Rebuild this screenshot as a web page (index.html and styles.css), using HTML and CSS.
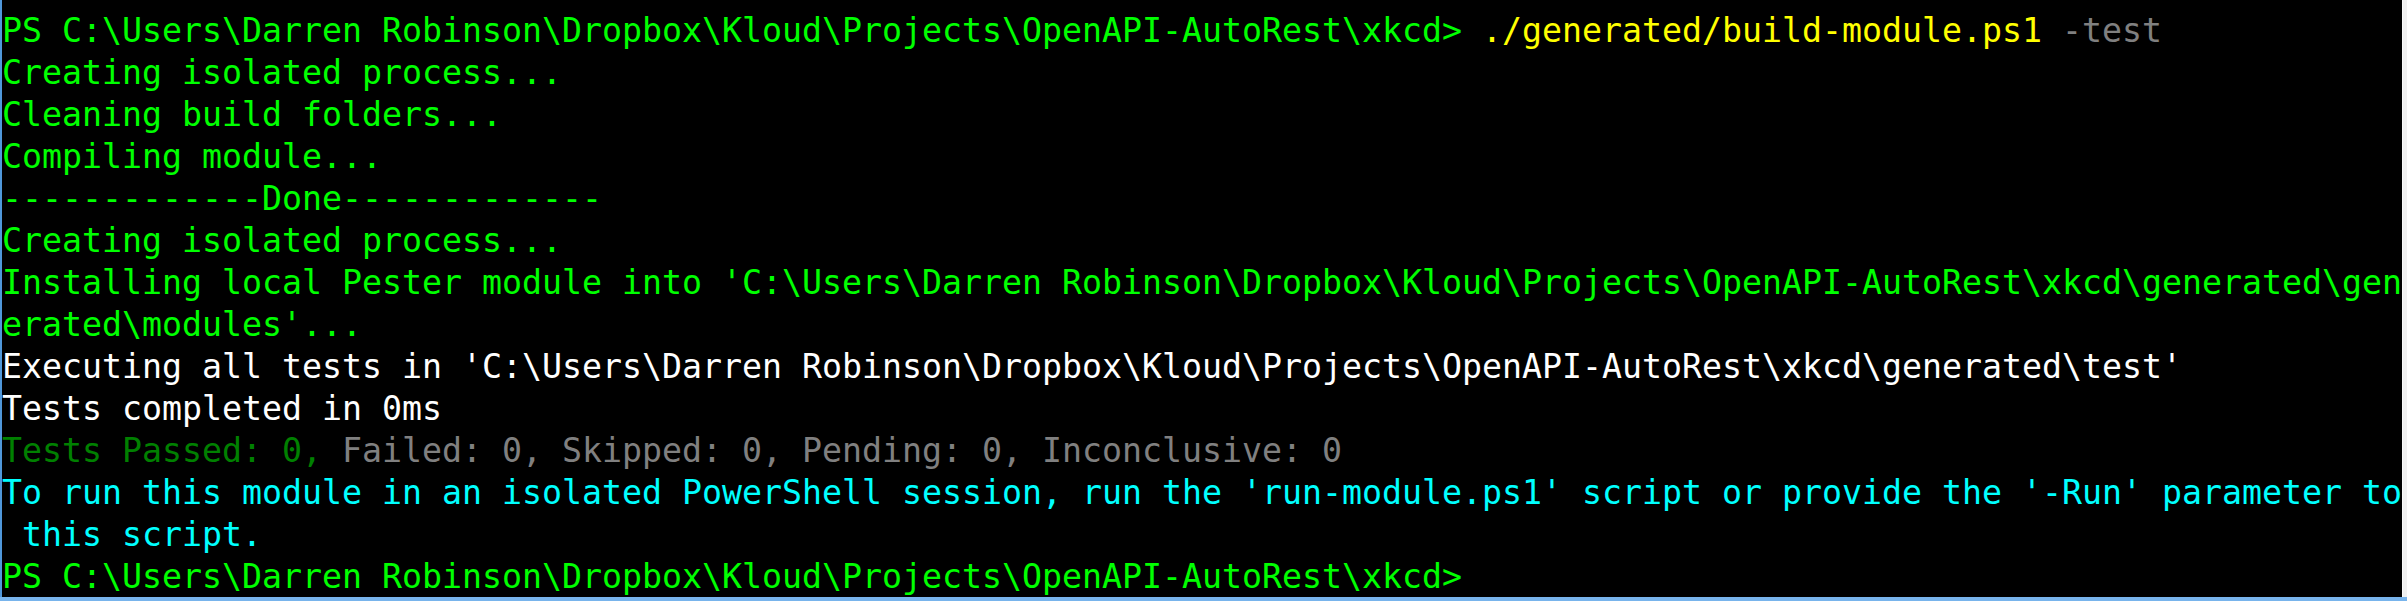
FILE: index.html
```html
<!DOCTYPE html>
<html>
<head>
<meta charset="utf-8">
<link rel="stylesheet" href="styles.css">
</head>
<body>
<div class="window">
  <div class="term">
    <div class="line"><span class="g">PS C:\Users\Darren Robinson\Dropbox\Kloud\Projects\OpenAPI-AutoRest\xkcd&gt; </span><span class="y">./generated/build-module.ps1</span><span class="gray"> -test</span></div>
    <div class="line g">Creating isolated process...</div>
    <div class="line g">Cleaning build folders...</div>
    <div class="line g">Compiling module...</div>
    <div class="line g">-------------Done-------------</div>
    <div class="line g">Creating isolated process...</div>
    <div class="line g">Installing local Pester module into 'C:\Users\Darren Robinson\Dropbox\Kloud\Projects\OpenAPI-AutoRest\xkcd\generated\gen</div>
    <div class="line g">erated\modules'...</div>
    <div class="line w">Executing all tests in 'C:\Users\Darren Robinson\Dropbox\Kloud\Projects\OpenAPI-AutoRest\xkcd\generated\test'</div>
    <div class="line w">Tests completed in 0ms</div>
    <div class="line"><span class="dg">Tests Passed: 0,</span><span class="gray"> Failed: 0, Skipped: 0, Pending: 0, Inconclusive: 0</span></div>
    <div class="line c">To run this module in an isolated PowerShell session, run the 'run-module.ps1' script or provide the '-Run' parameter to</div>
    <div class="line c"> this script.</div>
    <div class="line g">PS C:\Users\Darren Robinson\Dropbox\Kloud\Projects\OpenAPI-AutoRest\xkcd&gt;</div>
  </div>
  <div class="side"></div>
</div>
</body>
</html>
```

FILE: styles.css
```css
html, body {
  margin: 0;
  padding: 0;
  background: #f0f0f0;
}

.window {
  display: flex;
  width: 2407px;
  height: 601px;
  box-sizing: border-box;
  border-bottom: 4px solid #78b4ec;
  overflow: hidden;
}

.term {
  box-sizing: border-box;
  width: 2402px;
  height: 597px;
  background: #000;
  border-left: 2px solid #4f97da;
  padding-top: 10px;
  overflow: hidden;
  font-family: "DejaVu Sans Mono", "Liberation Mono", monospace;
  font-size: 33.22px;
  line-height: 42px;
}

.side {
  flex: 1;
  background: #f0f0f0;
  border-left: 1px solid #fafafa;
}

.line {
  white-space: pre;
  height: 42px;
}

.g { color: #00ff00; }
.y { color: #ffff00; }
.gray { color: #808080; }
.w { color: #ffffff; }
.dg { color: #008000; }
.c { color: #00ffff; }
```
